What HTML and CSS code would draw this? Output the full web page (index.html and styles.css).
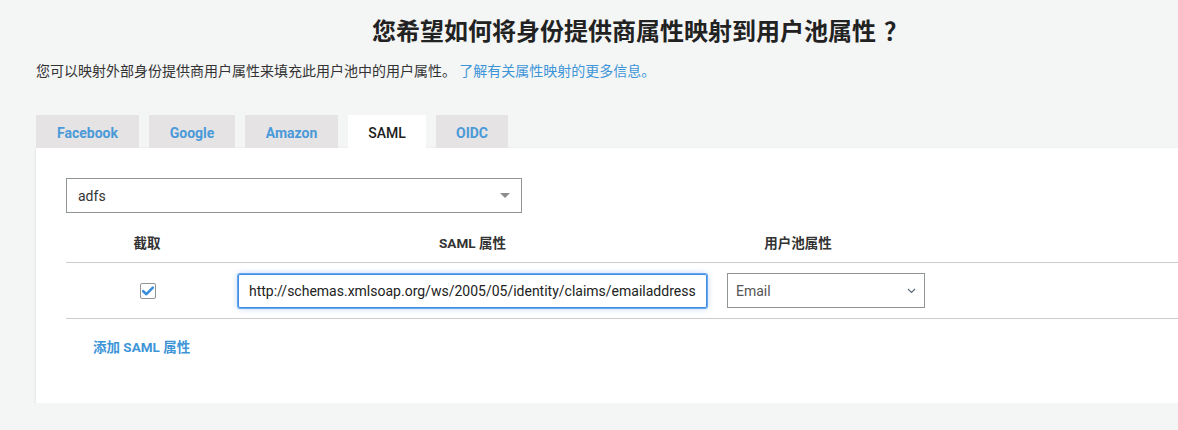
FILE: index.html
```html
<!DOCTYPE html>
<html lang="zh-CN">
<head>
<meta charset="utf-8">
<title>属性映射</title>
<link rel="stylesheet" href="styles.css">
</head>
<body>
<div class="page">
  <h1 class="title">您希望如何将身份提供商属性映射到用户池属性<span class="qmark">？</span></h1>
  <p class="intro">您可以映射外部身份提供商用户属性来填充此用户池中的用户属性。 <a class="link" href="#">了解有关属性映射的更多信息。</a></p>

  <div class="tabs">
    <div class="tab">Facebook</div>
    <div class="tab">Google</div>
    <div class="tab">Amazon</div>
    <div class="tab active">SAML</div>
    <div class="tab">OIDC</div>
  </div>

  <div class="panel">
    <div class="provider-select">
      <span class="provider-value">adfs</span>
      <span class="caret"></span>
    </div>

    <div class="grid head">
      <div class="hcell">截取</div>
      <div class="hcell">SAML 属性</div>
      <div class="hcell">用户池属性</div>
      <div></div>
    </div>

    <div class="grid row">
      <div class="cell center">
        <span class="checkbox">
          <svg width="12" height="10" viewBox="0 0 12 10"><path d="M1.2 5.2 L4.4 8.2 L10.8 1.6" fill="none" stroke="#3a8fdc" stroke-width="2.6" stroke-linecap="round" stroke-linejoin="round"/></svg>
        </span>
      </div>
      <div class="cell">
        <div class="text-input">http://schemas.xmlsoap.org/ws/2005/05/identity/claims/emailaddress</div>
      </div>
      <div class="cell">
        <div class="attr-select">
          <span>Email</span>
          <svg width="9" height="6" viewBox="0 0 9 6"><path d="M1 1 L4.5 4.5 L8 1" fill="none" stroke="#5b6a7a" stroke-width="1.2"/></svg>
        </div>
      </div>
      <div></div>
    </div>

    <div class="add-row"><a class="add-link" href="#">添加 SAML 属性</a></div>
  </div>
</div>
</body>
</html>
```

FILE: styles.css
```css
html, body {
  margin: 0;
  padding: 0;
  background: #f4f5f5;
  overflow: hidden;
}

body {
  font-family: Roboto, "Noto Sans CJK SC", "Liberation Sans", sans-serif;
  color: #333;
}

.page {
  width: 1194px;
  margin-left: 36px;
  padding-top: 14px;
}

.title {
  margin: 0;
  padding-left: 14px;
  font-family: "Noto Sans CJK SC", sans-serif;
  font-size: 24px;
  line-height: 32px;
  font-weight: 700;
  color: #222;
  text-align: center;
}

.qmark {
  margin-left: 8px;
}

.intro {
  margin: 14px 0 0;
  font-family: "Noto Sans CJK SC", sans-serif;
  font-size: 14px;
  line-height: 20px;
  color: #333;
}

.link {
  color: #3d95d8;
  text-decoration: none;
}

.tabs {
  display: flex;
  gap: 10px;
  margin-top: 35px;
  height: 33px;
}

.tab {
  display: flex;
  align-items: center;
  justify-content: center;
  padding: 2px 20px 0;
  background: #e5e3e4;
  color: #4a9ad9;
  font-family: Roboto, sans-serif;
  font-weight: 700;
  font-size: 14px;
}

.tab:nth-child(1) { width: 63px; }
.tab:nth-child(2) { width: 46px; }
.tab:nth-child(3) { width: 53px; }
.tab:nth-child(4) { width: 38px; }
.tab:nth-child(5) { width: 32px; }

.tab.active {
  background: #fff;
  color: #1d1d1d;
  font-weight: 500;
  position: relative;
  z-index: 1;
}

.panel {
  background: #fff;
  padding: 30px 30px 47px;
  box-shadow: 0 1px 3px rgba(0, 0, 0, 0.13);
}

.provider-select {
  height: 33px;
  border: 1px solid #8f9496;
  display: flex;
  align-items: center;
  justify-content: space-between;
  padding: 0 11px;
  box-sizing: content-box;
  width: 432px;
}

.provider-value {
  font-size: 14px;
  color: #333;
}

.caret {
  width: 0;
  height: 0;
  border-left: 5px solid transparent;
  border-right: 5px solid transparent;
  border-top: 5px solid #8c8c8c;
}

.grid {
  display: grid;
  grid-template-columns: 162px 489px 162px 1fr;
}

.head {
  padding: 20px 0 9px;
  border-bottom: 1px solid #cccccc;
}

.hcell {
  text-align: center;
  font-family: Roboto, "Noto Sans CJK SC", sans-serif;
  font-weight: 700;
  font-size: 13.5px;
  line-height: 20px;
  color: #333;
}

.row {
  padding: 10px 0;
  border-bottom: 1px solid #cccccc;
  align-items: center;
}

.cell {
  padding: 0 10px;
  display: flex;
  align-items: center;
}

.cell.center {
  justify-content: center;
}

.checkbox {
  width: 14px;
  height: 14px;
  border: 1px solid #8f9496;
  border-radius: 2px;
  display: flex;
  align-items: center;
  justify-content: center;
  background: #fff;
  margin-left: 2px;
}

.text-input {
  flex: none;
  box-sizing: border-box;
  width: 469px;
  height: 34px;
  border: 1px solid #3f8ee6;
  border-radius: 2px;
  box-shadow: 0 0 0 1px #6aa7ec, 0 0 6px rgba(66, 140, 230, 0.45);
  padding: 0 10px;
  display: flex;
  align-items: center;
  font-size: 14px;
  color: #222;
  white-space: nowrap;
  overflow: hidden;
}

.attr-select {
  flex: none;
  box-sizing: border-box;
  width: 198px;
  height: 35px;
  border: 1px solid #8f9496;
  padding: 0 8px;
  display: flex;
  align-items: center;
  justify-content: space-between;
  font-size: 14px;
  color: #555;
}

.add-row {
  padding: 19px 0 0 27px;
  line-height: 17px;
}

.add-link {
  color: #3d95d8;
  font-weight: 700;
  font-size: 13.5px;
  text-decoration: none;
}
```
